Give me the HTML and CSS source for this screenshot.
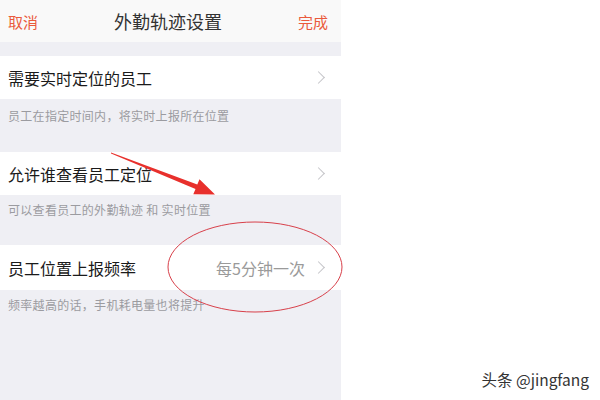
FILE: index.html
```html
<!DOCTYPE html>
<html lang="zh">
<head>
    <meta charset="UTF-8">
    <title>外勤轨迹设置</title>
    <link rel="stylesheet" href="styles.css">
</head>
<body>
    <div class="page">
        <div class="phone">
            <div class="nav-bar">
                <span class="nav-btn">取消</span>
                <span class="nav-title">外勤轨迹设置</span>
                <span class="nav-btn right">完成</span>
            </div>
            <div class="gap"></div>

            <div class="cell">
                <span class="cell-title">需要实时定位的员工</span>
                <span class="chevron"></span>
            </div>
            <div class="note note-1">员工在指定时间内，将实时上报所在位置</div>

            <div class="cell">
                <span class="cell-title">允许谁查看员工定位</span>
                <span class="chevron"></span>
            </div>
            <div class="note note-2">可以查看员工的外勤轨迹 和 实时位置</div>

            <div class="cell cell-tall">
                <span class="cell-title">员工位置上报频率</span>
                <span class="cell-value">每5分钟一次</span>
                <span class="chevron"></span>
            </div>
            <div class="note note-3">频率越高的话，手机耗电量也将提升</div>
        </div>

        <div class="side">
            <span class="watermark">头条 @jingfang</span>
        </div>

        <!-- 标注：箭头和圈 -->
        <svg class="marks" width="600" height="400" viewBox="0 0 600 400">
            <polygon points="111,152.4 197.3,184.4 199.5,179.2 215,194.5 193.3,194.3 195.5,189 111,153.6" fill="#e8302c"/>
            <ellipse cx="255" cy="267" rx="87" ry="45" fill="none" stroke="#d8404a" stroke-width="1"/>
        </svg>
    </div>
</body>
</html>
```

FILE: styles.css
```css
body {
    margin: 0;
    font-family: "Noto Sans CJK SC", "Noto Sans", sans-serif;
    background: white;
}

.page {
    position: relative;
    width: 600px;
    height: 400px;
    display: flex;
    overflow: hidden;
}

.phone {
    width: 341px;
    height: 400px;
    background: #efeff4;
    display: flex;
    flex-direction: column;
}

.nav-bar {
    height: 42px;
    background: #f9f9f9;
    padding: 0 13px 0 8px;
    display: grid;
    grid-template-columns: 1fr auto 1fr;
    align-items: center;
}

.nav-btn {
    color: #ea5a3c;
    font-size: 15px;
}

.nav-btn.right {
    text-align: right;
}

.nav-title {
    color: #333;
    font-size: 18px;
}

.gap {
    height: 14px;
}

.cell {
    height: 43px;
    background: white;
    padding: 0 18px 0 8px;
    display: flex;
    align-items: center;
}

.cell-tall {
    height: 45px;
}

.cell-title {
    flex: 1;
    color: #1a1a1a;
    font-size: 16px;
}

.cell-value {
    color: #9a9a9a;
    font-size: 16px;
    margin-right: 9px;
}

.chevron {
    width: 8px;
    height: 8px;
    border-top: 1.3px solid #c4c4c8;
    border-right: 1.3px solid #c4c4c8;
    transform: rotate(45deg);
}

.note {
    color: #9b9ba0;
    font-size: 12px;
    letter-spacing: 0.3px;
    line-height: 16px;
    padding: 9px 8px 0;
    box-sizing: border-box;
}

.note-1 {
    height: 53px;
}

.note-2 {
    height: 50px;
    padding-top: 7px;
}

.note-3 {
    flex: 1;
    padding-top: 7px;
}

.side {
    flex: 1;
    display: flex;
    align-items: flex-end;
    justify-content: flex-end;
    padding: 0 11px 10px 0;
}

.watermark {
    color: #333;
    font-size: 15.5px;
}

.marks {
    position: absolute;
    left: 0;
    top: 0;
    pointer-events: none;
}
```
